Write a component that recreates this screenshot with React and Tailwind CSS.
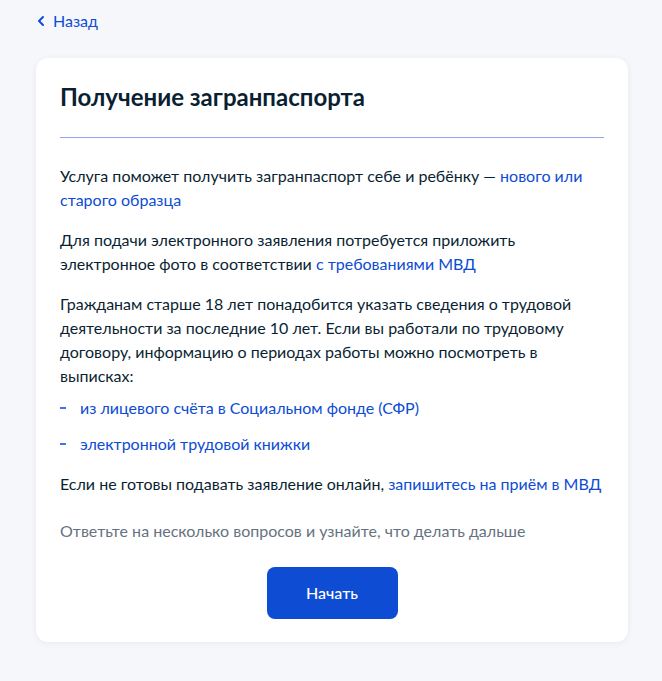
import React from 'react';

function BackLink() {
  return (
    <a href="#" className="inline-flex items-center gap-2 text-[#0d4cd3] text-base leading-6">
      <svg width="8" height="12" viewBox="0 0 8 12" fill="none">
        <path d="M6 2L2 6L6 10" stroke="#0d4cd3" strokeWidth="2" strokeLinecap="round" strokeLinejoin="round" />
      </svg>
      <span>Назад</span>
    </a>
  );
}

function Link({ children }) {
  return <a href="#" className="text-[#0d4cd3]">{children}</a>;
}

export default function App() {
  const items = ['из лицевого счёта в Социальном фонде (СФР)', 'электронной трудовой книжки'];

  return (
    <div className="min-h-[681px] bg-[#f5f7fb] font-['Lato',sans-serif] text-[#0b1f33]">
      <div className="pl-[36px] pr-[34px] pt-[9px] pb-10">
        <div className="pl-[1px]">
          <BackLink />
        </div>
        <div className="mt-[25px] bg-white rounded-xl shadow-[0_1px_6px_rgba(11,31,51,0.06)] px-6 pt-[23px] pb-[23px]">
          <h1 className="text-2xl leading-8 font-bold">Получение загранпаспорта</h1>
          <div className="mt-6 h-px bg-[#8aa8ee]" />
          <div className="mt-[26px] text-base leading-6 space-y-4">
            <p>
              Услуга поможет получить загранпаспорт себе и ребёнку — <Link>нового или старого образца</Link>
            </p>
            <p>
              Для подачи электронного заявления потребуется приложить электронное фото в соответствии{' '}
              <Link>с требованиями МВД</Link>
            </p>
            <div>
              <p>
                Гражданам старше 18 лет понадобится указать сведения о трудовой деятельности за последние 10 лет. Если вы
                работали по трудовому договору, информацию о периодах работы можно посмотреть в выписках:
              </p>
              <ul className="mt-2 space-y-3">
                {items.map((item) => (
                  <li key={item} className="flex items-center">
                    <span className="w-5 flex">
                      <span className="w-[6px] h-[2px] bg-[#3f74ee]" />
                    </span>
                    <Link>{item}</Link>
                  </li>
                ))}
              </ul>
            </div>
            <p>
              Если не готовы подавать заявление онлайн, <Link>запишитесь на приём в МВД</Link>
            </p>
          </div>
          <p className="mt-[23px] text-base leading-6 text-[#66727f]">
            Ответьте на несколько вопросов и узнайте, что делать дальше
          </p>
          <div className="mt-6 flex justify-center">
            <button className="w-[131px] h-[52px] rounded-lg bg-[#0d4cd3] text-white text-base font-medium">
              Начать
            </button>
          </div>
        </div>
      </div>
    </div>
  );
}
